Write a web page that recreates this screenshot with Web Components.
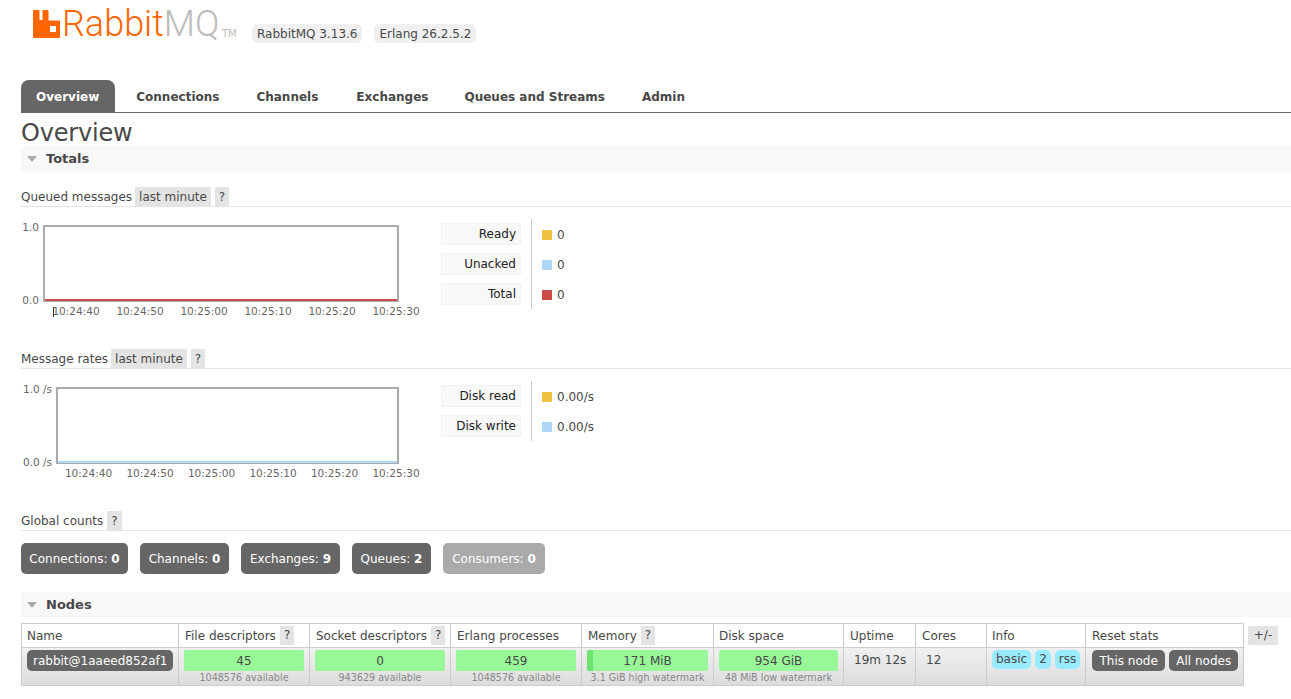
<!DOCTYPE html>
<html lang="en">
<head>
<meta charset="utf-8">
<title>RabbitMQ Management</title>
<style>
  html, body { margin: 0; padding: 0; background: #fff; }
  body { font: 12px/1.2 "DejaVu Sans", Verdana, sans-serif; color: #484848; overflow: hidden; height: 699px; }
</style>
</head>
<body>
<rmq-app></rmq-app>
<script>
class RmqHeader extends HTMLElement {
    constructor() {
        super();
        this.attachShadow({ mode: 'open' }).innerHTML = `
            <style>
                :host { display: flex; height: 80px; box-sizing: border-box; padding-left: 33px; align-items: flex-start; }
                svg { width: 27px; height: 28px; margin-top: 10px; flex: none; }
                .word { font: 300 36px/36px Roboto, sans-serif; margin: 6px 0 0 2px; color: #f60; width: 157px; white-space: nowrap; }
                .word b { font-weight: 300; color: #bbb; }
                .tm { font: 10px/10px "DejaVu Sans", sans-serif; color: #bbb; margin: 29px 0 0 3px; width: 15px; flex: none; white-space: nowrap; }
                .pills { display: flex; gap: 12px; margin: 24px 0 0 15px; }
                span.pill { background: #f0f0f0; border-radius: 5px; padding: 0 5px; height: 19px; line-height: 21px; white-space: nowrap; }
            </style>
            <svg viewBox="0 0 27 28"><path fill="#f60" fill-rule="evenodd" d="M0 1a1 1 0 0 1 1-1h4.500a1 1 0 0 1 1 1v9h3V1a1 1 0 0 1 1-1h4a1 1 0 0 1 1 1v9.500h10.500a1 1 0 0 1 1 1V27a1 1 0 0 1-1 1H1a1 1 0 0 1-1-1zM17 16v6h6v-6z"/></svg>
            <div class="word">Rabbit<b>MQ</b></div>
            <div class="tm">TM</div>
            <div class="pills"><span class="pill">RabbitMQ 3.13.6</span><span class="pill">Erlang 26.2.5.2</span></div>
        `;
    }
}

class RmqTabs extends HTMLElement {
    constructor() {
        super();
        const tabs = ['Overview', 'Connections', 'Channels', 'Exchanges', 'Queues and Streams', 'Admin'];
        this.attachShadow({ mode: 'open' }).innerHTML = `
            <style>
                :host { display: flex; margin-left: 21px; height: 33px; box-sizing: border-box; border-bottom: 1px solid #666; }
                a { display: block; padding: 0 15px; margin-right: 7px; height: 32px; line-height: 35px; font-weight: bold; font-size: 12px; color: #484848; border-radius: 8px 8px 0 0; white-space: nowrap; }
                a.on { background: #666; color: #fff; padding-right: 16px; margin-right: 8px; }
                a:nth-child(2) { margin-right: 6px; }
                a:nth-child(4) { margin-right: 8px; }
                a:nth-child(5) { margin-right: 6px; }
            </style>
            ${tabs.map((t, i) => `<a class="${i === 0 ? 'on' : ''}">${t}</a>`).join('')}
        `;
    }
}

class RmqBar extends HTMLElement {
    constructor() {
        super();
        this.attachShadow({ mode: 'open' }).innerHTML = `
            <style>
                :host { display: flex; align-items: center; height: 25px; margin-left: 21px; background: #f8f8f8; font-weight: bold; font-size: 13px; }
                i { width: 0; height: 0; border: 5.500px solid transparent; border-top: 6px solid #aaa; border-bottom: 0; margin: 1px 9px 0 6px; }
            </style>
            <i></i><slot></slot>
        `;
    }
}

class RmqSub extends HTMLElement {
    constructor() {
        super();
        const range = this.getAttribute('range');
        this.attachShadow({ mode: 'open' }).innerHTML = `
            <style>
                :host { display: flex; align-items: stretch; height: 19px; margin-left: 21px; border-bottom: 1px solid #e4e4e4; line-height: 21px; }
                .chip { background: #e4e4e4; padding: 0 4px; margin-left: 3px; white-space: nowrap; }
                .q { background: #e4e4e4; padding: 0 4px; margin-left: 4px; }
            </style>
            <slot></slot>
            ${range ? `<span class="chip">${range}</span>` : ''}
            <span class="q">?</span>
        `;
    }
}

class RmqChart extends HTMLElement {
    constructor() {
        super();
        const left = +this.getAttribute('plot-left');
        const unit = this.getAttribute('unit') || '';
        const line = this.getAttribute('line');
        const step = +this.getAttribute('step');
        const first = +this.getAttribute('first');
        const tick = this.hasAttribute('tick');
        const times = ['10:24:40', '10:24:50', '10:25:00', '10:25:10', '10:25:20', '10:25:30'];
        this.attachShadow({ mode: 'open' }).innerHTML = `
            <style>
                :host { display: block; position: relative; width: 420px; height: 98px; font-size: 10.500px; color: #666; }
                .plot { position: absolute; left: ${left}px; top: 0; right: 21px; height: 77px; box-sizing: border-box; border: 2px solid #aaa; background: #fff; }
                .plot::after { content: ''; position: absolute; left: 0; right: 0; bottom: -1px; height: 2px; background: ${line}; }
                .y { position: absolute; right: ${420 - left + 4}px; white-space: nowrap; }
                .t { position: absolute; top: 80px; width: 60px; text-align: center; }
                .tick { position: absolute; left: 53px; top: 82px; width: 1px; height: 10px; background: #333; }
            </style>
            <div class="y" style="top:-4px">1.0${unit}</div>
            <div class="y" style="top:69px">0.0${unit}</div>
            <div class="plot"></div>
            ${tick ? '<div class="tick"></div>' : ''}
            ${times.map((t, i) => `<div class="t" style="left:${first + i * step - 30}px">${t}</div>`).join('')}
        `;
    }
}

class RmqLegend extends HTMLElement {
    constructor() {
        super();
        const rows = JSON.parse(this.getAttribute('rows'));
        this.attachShadow({ mode: 'open' }).innerHTML = `
            <style>
                :host { display: grid; grid-template-columns: 80px auto; grid-auto-rows: 22px; row-gap: 8px; position: relative; padding: 4px 0; margin-left: 21px; }
                .k { box-sizing: border-box; background: #f8f8f8; border: 1px solid #f2f2f2; border-radius: 2px; text-align: right; padding-right: 4px; line-height: 21px; color: #222; white-space: nowrap; }
                .v { display: flex; align-items: center; padding-left: 10px; margin-left: 10px; border-left: 1px solid #ccc; margin-top: -4px; margin-bottom: -4px; padding-top: 2px; white-space: nowrap; }
                s { width: 10px; height: 10px; margin-right: 5px; flex: none; }
            </style>
            ${rows.map(r => `<div class="k">${r[0]}</div><div class="v"><s style="background:${r[1]}"></s>${r[2]}</div>`).join('')}
        `;
    }
}

class RmqGraph extends HTMLElement {
    constructor() {
        super();
        this.attachShadow({ mode: 'open' }).innerHTML = `
            <style>:host { display: flex; align-items: flex-start; margin: 18px 0 0 0; }</style>
            <slot></slot>
        `;
    }
}

class RmqCounts extends HTMLElement {
    constructor() {
        super();
        const items = [['Connections', 0, 107], ['Channels', 0, 89], ['Exchanges', 9, 99], ['Queues', 2, 79], ['Consumers', 0, 102, true]];
        this.attachShadow({ mode: 'open' }).innerHTML = `
            <style>
                :host { display: flex; gap: 12px; margin: 12px 0 0 21px; }
                div { background: #666; color: #fff; border-radius: 5px; height: 31px; line-height: 33px; box-sizing: border-box; text-align: center; white-space: nowrap; }
                div.off { background: #aaa; }
            </style>
            ${items.map(i => `<div class="${i[3] ? 'off' : ''}" style="width:${i[2]}px">${i[0]}: <b>${i[1]}</b></div>`).join('')}
        `;
    }
}

class RmqNodes extends HTMLElement {
    constructor() {
        super();
        const cols = [
            ['Name', 157], ['File descriptors', 131, 1], ['Socket descriptors', 141, 1], ['Erlang processes', 131],
            ['Memory', 132, 1], ['Disk space', 130], ['Uptime', 72], ['Cores', 71], ['Info', 99], ['Reset stats', 158]
        ];
        const meter = (value, sub, extra = '') => `<td class="m"><div class="bar">${extra}<span>${value}</span></div><div class="sub">${sub}</div></td>`;
        this.attachShadow({ mode: 'open' }).innerHTML = `
            <style>
                :host { display: flex; align-items: flex-start; margin: 6px 0 0 21px; }
                table { border-collapse: collapse; table-layout: fixed; width: 1223px; flex: none; }
                th, td { border: 1px solid #ccc; padding: 0; text-align: left; vertical-align: top; color: #484848; }
                th { height: 21px; font-weight: normal; padding: 2px 5px 0 6px; white-space: nowrap; line-height: 21px; background: #fff; }
                th:nth-child(1), th:nth-child(6), th:nth-child(9) { padding-left: 5px; }
                th q { quotes: none; display: inline-block; background: #e4e4e4; height: 19px; line-height: 19px; padding: 0 4px; margin-left: 4px; vertical-align: top; }
                tbody tr { background: linear-gradient(#f0f0f0, #dcdcdc); }
                td { height: 38px; box-sizing: border-box; padding: 2px 5px 0; }
                .name { display: inline-block; background: #666; color: #fff; border-radius: 5px; height: 21px; line-height: 22px; padding: 0 6px; white-space: nowrap; }
                .bar { position: relative; background: #98f898; border-radius: 2px; height: 21px; line-height: 23px; text-align: center; margin-right: 0; overflow: hidden; }
                .bar span { position: relative; }
                .bar i { position: absolute; left: 0; top: 0; bottom: 0; width: 6px; background: #6ee26e; }
                .sub { font-size: 9.600px; color: #888; text-align: center; line-height: 13px; white-space: nowrap; margin: 0 -3px; }
                .plain { padding: 5px 10px 0; white-space: nowrap; }
                .tags { display: flex; gap: 4px; }
                .tags span { background: #99ebff; border-radius: 5px; height: 19px; line-height: 19px; padding: 0 4px; }
                .btns { display: flex; gap: 4px; margin-left: 1px; }
                .btns span { background: #666; color: #fff; border-radius: 5px; height: 21px; line-height: 22px; padding: 0 7.500px; white-space: nowrap; }
                .btns span + span { padding: 0 7px; }
                .pm { flex: none; margin: 3px 0 0 4px; width: 30px; height: 19px; line-height: 19px; text-align: center; background: #e4e4e4; }
            </style>
            <table>
                <colgroup>${cols.map(c => `<col style="width:${c[1]}px">`).join('')}</colgroup>
                <thead><tr>${cols.map(c => `<th>${c[0]}${c[2] ? '<q>?</q>' : ''}</th>`).join('')}</tr></thead>
                <tbody><tr>
                    <td><span class="name">rabbit@1aaeed852af1</span></td>
                    ${meter('45', '1048576 available')}
                    ${meter('0', '943629 available')}
                    ${meter('459', '1048576 available')}
                    ${meter('171 MiB', '3.1 GiB high watermark', '<i></i>')}
                    ${meter('954 GiB', '48 MiB low watermark')}
                    <td class="plain">19m 12s</td>
                    <td class="plain">12</td>
                    <td><div class="tags"><span>basic</span><span>2</span><span>rss</span></div></td>
                    <td><div class="btns"><span>This node</span><span>All nodes</span></div></td>
                </tr></tbody>
            </table>
            <div class="pm">+/-</div>
        `;
    }
}

class RmqApp extends HTMLElement {
    constructor() {
        super();
        const ready = JSON.stringify([['Ready', '#edc240', '0'], ['Unacked', '#afd8f8', '0'], ['Total', '#cb4b4b', '0']]);
        const rates = JSON.stringify([['Disk read', '#edc240', '0.00/s'], ['Disk write', '#afd8f8', '0.00/s']]);
        this.attachShadow({ mode: 'open' }).innerHTML = `
            <style>
                :host { display: block; }
                h1 { font: normal 24px/29px "DejaVu Sans", sans-serif; letter-spacing: -.2px; margin: 4px 0 0 21px; height: 29px; color: #484848; }
                h1 span { position: relative; top: 2px; }
            </style>
            <rmq-header></rmq-header>
            <rmq-tabs></rmq-tabs>
            <h1><span>Overview</span></h1>
            <rmq-bar>Totals</rmq-bar>
            <rmq-sub range="last minute" style="margin-top:16px">Queued messages</rmq-sub>
            <rmq-graph>
                <rmq-chart plot-left="43" line="#cb4b4b" first="76" step="64" tick></rmq-chart>
                <rmq-legend rows='${ready}' style="margin-top:-6px"></rmq-legend>
            </rmq-graph>
            <rmq-sub range="last minute" style="margin-top:26px">Message rates</rmq-sub>
            <rmq-graph>
                <rmq-chart plot-left="56" unit=" /s" line="#afd8f8" first="88.500" step="61.500"></rmq-chart>
                <rmq-legend rows='${rates}' style="margin-top:-6px"></rmq-legend>
            </rmq-graph>
            <rmq-sub style="margin-top:26px">Global counts</rmq-sub>
            <rmq-counts></rmq-counts>
            <rmq-bar style="margin-top:18px">Nodes</rmq-bar>
            <rmq-nodes></rmq-nodes>
        `;
    }
}

customElements.define('rmq-header', RmqHeader);
customElements.define('rmq-tabs', RmqTabs);
customElements.define('rmq-bar', RmqBar);
customElements.define('rmq-sub', RmqSub);
customElements.define('rmq-chart', RmqChart);
customElements.define('rmq-legend', RmqLegend);
customElements.define('rmq-graph', RmqGraph);
customElements.define('rmq-counts', RmqCounts);
customElements.define('rmq-nodes', RmqNodes);
customElements.define('rmq-app', RmqApp);
</script>
</body>
</html>
